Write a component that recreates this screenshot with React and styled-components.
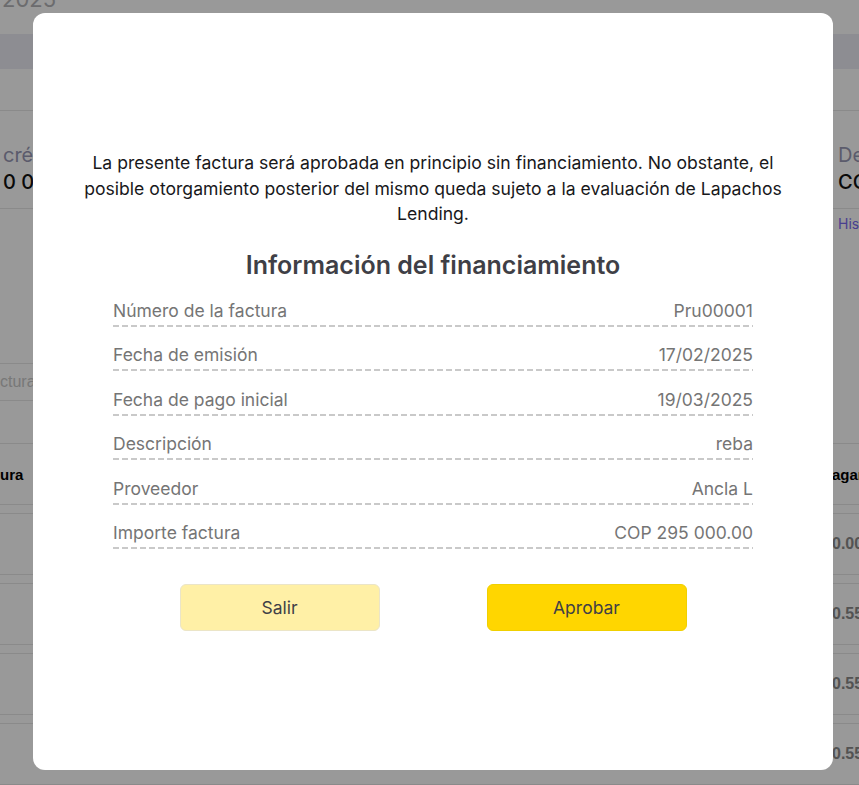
import React from "react";
import styled, { createGlobalStyle } from "styled-components";

const Global = createGlobalStyle`
  html, body { margin: 0; padding: 0; }
  body { font-family: Inter, "Noto Sans", sans-serif; background: #fff; overflow: hidden; }
  * { box-sizing: border-box; }
`;

/* ---------- background page ---------- */
const Page = styled.div`
  width: 859px;
  height: 785px;
  overflow: hidden;
  display: flex;
  flex-direction: column;
  background: #fff;
`;

const Header = styled.div`
  height: 37px;
  padding-left: 2px;
`;

const Year = styled.div`
  margin-top: -14px;
  font-size: 22px;
  line-height: 26px;
  color: #b4b4b8;
`;

const Band = styled.div`
  height: 35px;
  background: #ececf3;
  flex-shrink: 0;
`;

const StatsRow = styled.div`
  margin-top: 41px;
  height: 99px;
  border-top: 1px solid #e6e6e6;
  border-bottom: 1px solid #e6e6e6;
  display: grid;
  grid-template-columns: 838px 1fr;
  padding-top: 32px;
  flex-shrink: 0;
`;

const Stat = styled.div`
  display: flex;
  flex-direction: column;
  gap: 3px;
  white-space: nowrap;
  padding-left: ${(p) => p.$indent || 0}px;
`;

const StatLabel = styled.div`
  font-size: 20px;
  line-height: 24px;
  color: #9898b4;
`;

const StatValue = styled.div`
  font-size: 20px;
  line-height: 24px;
  font-weight: 500;
  color: #111;
`;

const LinkRow = styled.div`
  display: grid;
  grid-template-columns: 838px 1fr;
  padding-top: 6px;
  height: 154px;
  flex-shrink: 0;
`;

const HistLink = styled.div`
  font-size: 14px;
  line-height: 18px;
  color: #7a6af0;
  white-space: nowrap;
`;

const Search = styled.div`
  width: 400px;
  height: 38px;
  border: 1px solid #e6e6e6;
  border-left: none;
  display: flex;
  align-items: center;
  padding-left: 0;
  font-size: 16px;
  color: #c8c8c8;
  font-family: "Liberation Sans", Arial, sans-serif;
  flex-shrink: 0;
`;

const Table = styled.div`
  margin-top: 42px;
  display: flex;
  flex-direction: column;
  gap: 8px;
  font-family: "Liberation Sans", Arial, sans-serif;
`;

const TRow = styled.div`
  height: 62px;
  border-top: 1px solid #e6e6e6;
  border-bottom: 1px solid #e6e6e6;
  display: grid;
  grid-template-columns: 832px 1fr;
  align-items: center;
  white-space: nowrap;
  font-size: ${(p) => (p.$head ? 15 : 16)}px;
  font-weight: 700;
  color: ${(p) => (p.$head ? "#000" : "#8a8a8a")};
`;

/* ---------- modal ---------- */
const Overlay = styled.div`
  position: fixed;
  inset: 0;
  background: rgba(0, 0, 0, 0.4);
  padding: 13px 0 0 33px;
`;

const Modal = styled.div`
  width: 800px;
  height: 757px;
  background: #fff;
  border-radius: 12px;
  padding: 137px 46px 0;
  display: flex;
  flex-direction: column;
  align-items: center;
`;

const Notice = styled.p`
  margin: 0;
  font-size: 17.6px;
  line-height: 25.5px;
  color: #18181b;
  text-align: center;
`;

const Title = styled.h2`
  margin: 22px 0 0;
  font-size: 25px;
  line-height: 32px;
  font-weight: 600;
  color: #3f3f46;
  text-align: center;
`;

const List = styled.div`
  margin-top: 18px;
  width: 640px;
  display: flex;
  flex-direction: column;
`;

const InfoRow = styled.div`
  display: flex;
  justify-content: space-between;
  font-size: 17.5px;
  line-height: 24px;
  color: #757575;
  padding-bottom: 3px;
  margin-bottom: 16.5px;
  background-image: repeating-linear-gradient(to right, #c9c9c9 0 6px, transparent 6px 9px);
  background-size: 100% 2px;
  background-repeat: no-repeat;
  background-position: left bottom;
  height: 28px;
`;

const Buttons = styled.div`
  margin-top: 18px;
  display: flex;
  gap: 107px;
  justify-content: center;
`;

const Button = styled.button`
  width: 200px;
  height: 47px;
  border-radius: 6px;
  border: 1px solid ${(p) => (p.$primary ? "#f0d000" : "#ebe5c8")};
  background: ${(p) => (p.$primary ? "#ffd600" : "#fff0a6")};
  font-family: Inter, sans-serif;
  font-size: 17.5px;
  color: #3f3f46;
  cursor: pointer;
`;

const rows = [
  ["Número de la factura", "Pru00001"],
  ["Fecha de emisión", "17/02/2025"],
  ["Fecha de pago inicial", "19/03/2025"],
  ["Descripción", "reba"],
  ["Proveedor", "Ancla L"],
  ["Importe factura", "COP 295 000.00"],
];

export default function App() {
  return (
    <>
      <Global />
      <Page>
        <Header>
          <Year>2025</Year>
        </Header>
        <Band />
        <StatsRow>
          <Stat $indent={3}>
            <StatLabel>crédito disponible</StatLabel>
            <StatValue>0 000 000.00</StatValue>
          </Stat>
          <Stat>
            <StatLabel>Deuda</StatLabel>
            <StatValue>COP</StatValue>
          </Stat>
        </StatsRow>
        <LinkRow>
          <div />
          <HistLink>Historial</HistLink>
        </LinkRow>
        <Search>ctura</Search>
        <Table>
          <TRow $head>
            <span>ura</span>
            <span>agar</span>
          </TRow>
          <TRow>
            <span />
            <span>0.00</span>
          </TRow>
          <TRow>
            <span />
            <span>0.55</span>
          </TRow>
          <TRow>
            <span />
            <span>0.55</span>
          </TRow>
          <TRow>
            <span />
            <span>0.55</span>
          </TRow>
        </Table>
      </Page>
      <Overlay>
        <Modal>
          <Notice>
            La presente factura será aprobada en principio sin financiamiento. No obstante, el
            posible otorgamiento posterior del mismo queda sujeto a la evaluación de Lapachos
            Lending.
          </Notice>
          <Title>Información del financiamiento</Title>
          <List>
            {rows.map(([k, v]) => (
              <InfoRow key={k}>
                <span>{k}</span>
                <span>{v}</span>
              </InfoRow>
            ))}
          </List>
          <Buttons>
            <Button>Salir</Button>
            <Button $primary>Aprobar</Button>
          </Buttons>
        </Modal>
      </Overlay>
    </>
  );
}
